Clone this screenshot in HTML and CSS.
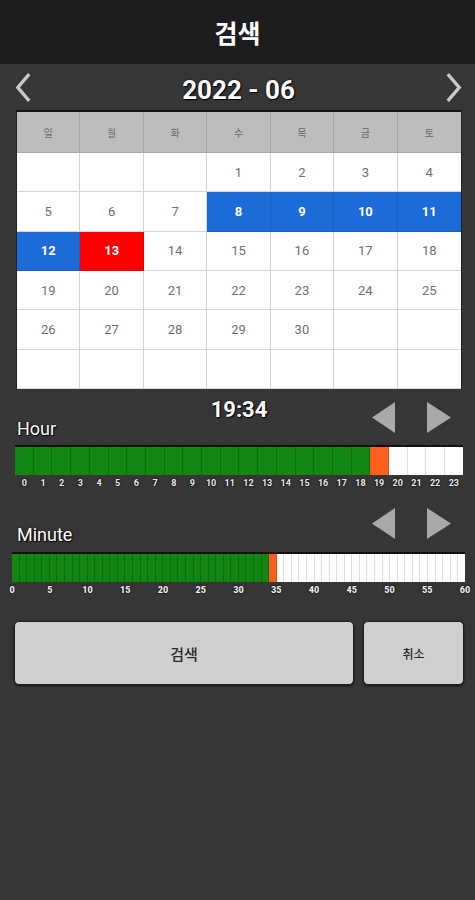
FILE: index.html
```html
<!DOCTYPE html>
<html lang="ko">
<head>
  <meta charset="UTF-8" />
  <meta name="viewport" content="width=device-width, initial-scale=1.0"/>
  <title>검색</title>
  <link rel="stylesheet" href="styles.css">
</head>
<body>
  <div class="topbar">검색</div>

  <div class="month-nav">
    <svg class="chev" viewBox="0 0 20 32"><polyline points="16,2 4,16 16,30"/></svg>
    <div class="month">2022 - 06</div>
    <svg class="chev" viewBox="0 0 20 32"><polyline points="4,2 16,16 4,30"/></svg>
  </div>

  <div class="calendar" id="calendar">
    <div class="wd">일</div><div class="wd">월</div><div class="wd">화</div><div class="wd">수</div><div class="wd">목</div><div class="wd">금</div><div class="wd">토</div>
  </div>

  <div class="time-head hour-head">
    <div class="label">Hour</div>
    <div class="clock">19:34</div>
    <div class="arrows">
      <svg viewBox="0 0 24 31"><polygon points="23,0 23,31 0,15.5"/></svg>
      <svg viewBox="0 0 24 31"><polygon points="0,0 0,31 24,15.5"/></svg>
    </div>
  </div>
  <div class="bar hour-bar" id="hourBar"></div>
  <div class="ticks hour-ticks" id="hourTicks"></div>

  <div class="time-head minute-head">
    <div class="label">Minute</div>
    <div></div>
    <div class="arrows">
      <svg viewBox="0 0 24 31"><polygon points="23,0 23,31 0,15.5"/></svg>
      <svg viewBox="0 0 24 31"><polygon points="0,0 0,31 24,15.5"/></svg>
    </div>
  </div>
  <div class="bar minute-bar" id="minuteBar"></div>
  <div class="ticks minute-ticks" id="minuteTicks"></div>

  <div class="buttons">
    <button class="btn btn-search">검색</button>
    <button class="btn btn-cancel">취소</button>
  </div>

  <script>
    // kalender: juni 2022 startet am mittwoch
    const cal = document.getElementById("calendar");
    const start = 3, days = 30, today = 13;
    for (let i = 0; i < 42; i++) {
      const d = i - start + 1;
      const cell = document.createElement("div");
      cell.className = "day";
      if (d >= 1 && d <= days) {
        cell.textContent = d;
        if (d >= 8 && d <= 12) cell.classList.add("sel");
        if (d === today) cell.classList.add("today");
      }
      cal.appendChild(cell);
    }

    function fillBar(id, count, current) {
      const bar = document.getElementById(id);
      for (let i = 0; i < count; i++) {
        const c = document.createElement("div");
        c.className = "cell" + (i < current ? " on" : i === current ? " now" : "");
        bar.appendChild(c);
      }
    }
    fillBar("hourBar", 24, 19);
    fillBar("minuteBar", 60, 34);

    const ht = document.getElementById("hourTicks");
    for (let h = 0; h < 24; h++) {
      ht.innerHTML += "<span>" + h + "</span>";
    }
    const mt = document.getElementById("minuteTicks");
    for (let m = 0; m <= 60; m += 5) {
      mt.innerHTML += "<span><b>" + m + "</b></span>";
    }
  </script>
</body>
</html>
```

FILE: styles.css
```css
body {
  margin: 0;
  background: #363636;
  font-family: Roboto, "Noto Sans CJK KR", sans-serif;
  min-height: 900px;
}
.topbar {
  height: 64px;
  background: #1d1c1f;
  color: white;
  font-family: "Noto Sans CJK KR", sans-serif;
  font-weight: bold;
  font-size: 25px;
  display: flex;
  align-items: center;
  justify-content: center;
}
.month-nav {
  height: 46px;
  display: flex;
  align-items: center;
  justify-content: space-between;
  padding: 0 12px 0 14px;
}
.chev {
  width: 19px;
  height: 31px;
  fill: none;
  stroke: #c9c9c9;
  stroke-width: 3.5;
}
.month {
  color: white;
  font-weight: bold;
  font-size: 26px;
  padding-top: 5px;
  text-shadow: 0 0 2px #000, 1px 1px 1px #000;
}
.calendar {
  margin-left: 17px;
  width: 444px;
  display: grid;
  grid-template-columns: repeat(7, 1fr);
  grid-template-rows: 41px repeat(6, 1fr);
  height: 279px;
  background: white;
  border-top: 2px solid #151515;
  box-sizing: border-box;
  box-shadow: -1px 0 0 #222, 1px 0 0 #222;
}
.wd {
  background: #bdbdbd;
  color: #6a6a6a;
  font-family: "Noto Sans CJK KR", sans-serif;
  font-size: 10px;
  display: flex;
  align-items: center;
  justify-content: center;
  border-right: 1px solid #a8a8a8;
  border-bottom: 1px solid #a8a8a8;
}
.day {
  display: flex;
  align-items: center;
  justify-content: center;
  color: #707070;
  font-size: 13px;
  border-right: 1px solid #d4d4d4;
  border-bottom: 1px solid #d4d4d4;
}
.wd:nth-child(7n), .day:nth-child(7n) {
  border-right: none;
}
.day.sel, .day.today {
  color: white;
  font-weight: bold;
}
.day.sel {
  background: #1c6bd6;
  border-color: #1a5fbf;
}
.day.today {
  background: #ff0000;
  border-color: #e00000;
}
.time-head {
  display: grid;
  grid-template-columns: 1fr auto 1fr;
  padding: 0 24px 0 17px;
}
.hour-head {
  height: 56px;
}
.minute-head {
  height: 61px;
}
.label {
  align-self: end;
  color: white;
  font-size: 18px;
  line-height: 20px;
  text-shadow: 0 0 2px #000, 1px 1px 1px #000;
}
.hour-head .label {
  margin-bottom: 6px;
}
.minute-head .label {
  margin-bottom: 7px;
}
.clock {
  padding: 8px 0 0 10px;
  color: white;
  font-weight: bold;
  font-size: 22px;
  line-height: 26px;
  text-shadow: 0 0 2px #000, 1px 1px 1px #000;
}
.arrows {
  justify-self: end;
  display: flex;
  gap: 31px;
}
.hour-head .arrows {
  margin-top: 13px;
}
.minute-head .arrows {
  margin-top: 17px;
}
.arrows svg {
  width: 24px;
  height: 31px;
  fill: #a9a9a9;
}
.bar {
  height: 30px;
  display: flex;
  background: white;
  border-top: 2px solid #111;
  box-sizing: border-box;
}
.hour-bar {
  margin: 0 12px 0 15px;
}
.minute-bar {
  margin: 0 10px 0 12px;
}
.cell {
  flex: 1;
  border-right: 1px solid #dedede;
}
.cell:last-child {
  border-right: none;
}
.cell.on {
  background: #128512;
  border-right-color: #0c6d0c;
}
.cell.now {
  background: #ff5e1f;
  border-right-color: #e0501a;
}
.ticks {
  display: flex;
  height: 16px;
  color: #eee;
  font-size: 9px;
  font-weight: bold;
  line-height: 16px;
  text-shadow: 0 0 2px #000, 0 0 1px #000;
}
.hour-ticks {
  margin: 0 12px 0 15px;
}
.hour-ticks span {
  flex: 1;
  text-align: center;
}
.minute-ticks {
  margin: 0 10px 0 12px;
  justify-content: space-between;
}
.minute-ticks span {
  width: 0;
  display: flex;
  justify-content: center;
}
.buttons {
  display: flex;
  gap: 9px;
  margin: 23px 11px 0 14px;
}
.btn {
  height: 64px;
  background: #cfcfcf;
  border: 1px solid #1e1e1e;
  border-radius: 5px;
  color: #2a2a2a;
  font-family: "Noto Sans CJK KR", sans-serif;
  font-weight: 500;
  box-shadow: 0 1px 2px #111;
}
.btn-search {
  flex: 1;
  font-size: 15px;
}
.btn-cancel {
  width: 101px;
  font-size: 12px;
}
```
